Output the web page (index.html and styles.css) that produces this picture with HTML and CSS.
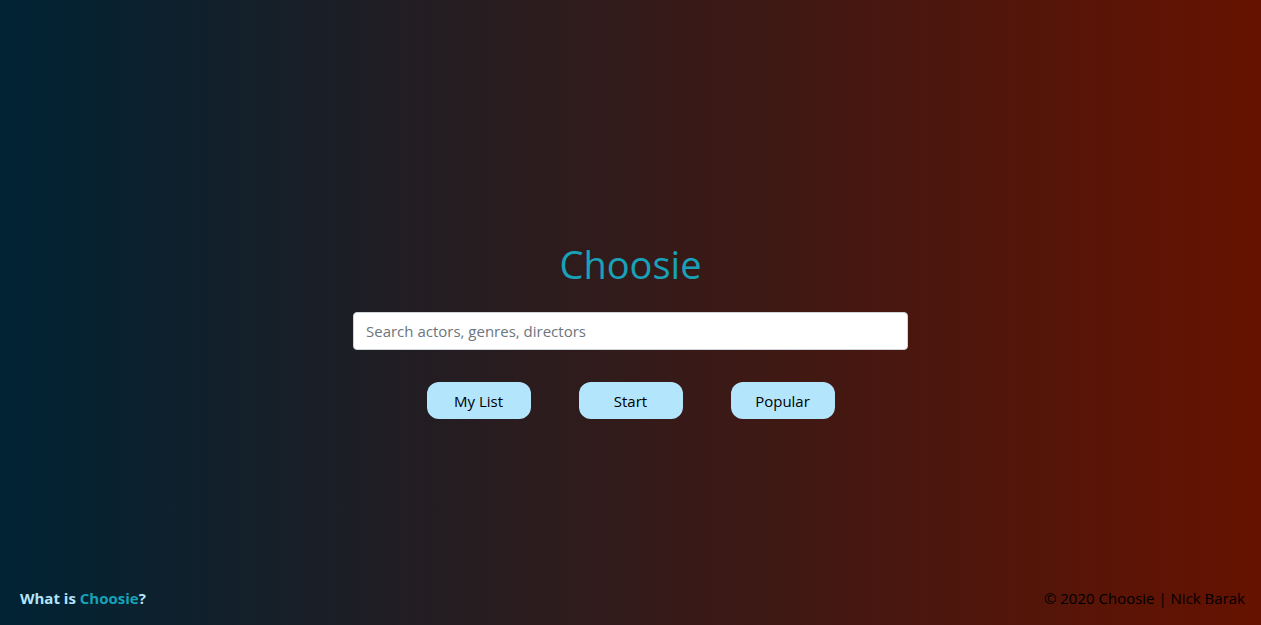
FILE: index.html
```html
<!DOCTYPE html>
<html lang="en">
<head>
<meta charset="utf-8">
<title>Choosie</title>
<link rel="stylesheet" href="styles.css">
</head>
<body>
<div class="page">
  <main class="hero">
    <h1 class="title">Choosie</h1>
    <input class="search" type="text" placeholder="Search actors, genres, directors">
    <div class="actions">
      <button class="btn">My List</button>
      <button class="btn">Start</button>
      <button class="btn">Popular</button>
    </div>
  </main>
  <footer class="footer">
    <a class="about">What is <span class="brand">Choosie</span>?</a>
    <span class="copy">© 2020 Choosie | Nick Barak</span>
  </footer>
</div>
</body>
</html>
```
FILE: styles.css
```css
* { box-sizing: border-box; }
html, body { margin: 0; height: 100%; }
body {
  font-family: "Open Sans", "Noto Sans", sans-serif;
  background: linear-gradient(to right, #002334, #661200);
  color: #000;
}
.page {
  height: 100vh;
  display: flex;
  flex-direction: column;
}
.hero {
  flex: 1;
  display: flex;
  flex-direction: column;
  align-items: center;
  justify-content: center;
  padding-top: 78px;
}
.title {
  margin: 0 0 24px;
  font-size: 38px;
  font-weight: 400;
  line-height: 48px;
  color: #17a2b8;
}
.search {
  width: 555px;
  height: 38px;
  padding: 6px 12px;
  border: 1px solid #ced4da;
  border-radius: 4px;
  font-family: inherit;
  font-size: 15px;
  background: #fff;
}
.search::placeholder { color: #6c757d; }
.actions {
  display: flex;
  gap: 48px;
  margin-top: 32px;
}
.btn {
  width: 104px;
  height: 37px;
  border: none;
  border-radius: 12px;
  background: #b3e5fc;
  color: #000;
  font-family: inherit;
  font-size: 15px;
}
.footer {
  display: flex;
  justify-content: space-between;
  align-items: center;
  padding: 0 16px 10px 20px;
  height: 44px;
}
.about {
  font-weight: 700;
  font-size: 15px;
  color: #b3e5fc;
}
.brand { color: #17a2b8; }
.copy { font-size: 15px; color: #000; }
```
